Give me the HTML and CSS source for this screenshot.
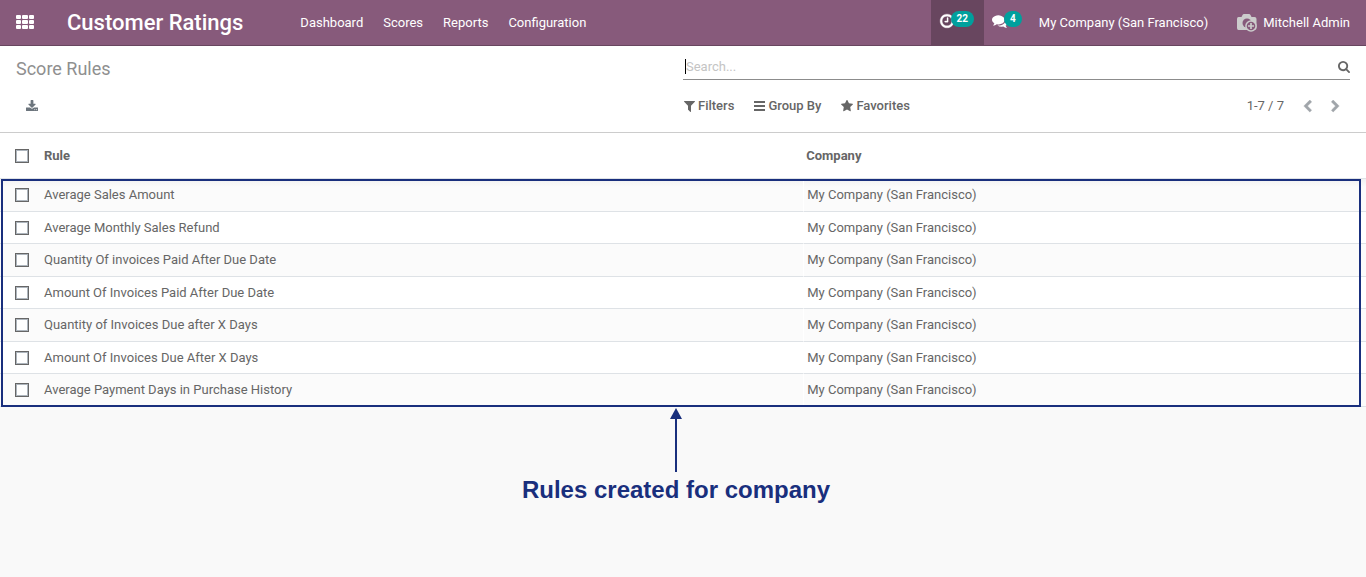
FILE: index.html
```html
<!DOCTYPE html>
<html lang="en">
<head>
<meta charset="utf-8">
<meta name="viewport" content="width=device-width, initial-scale=1">
<title>Customer Ratings - Score Rules</title>
<link rel="stylesheet" href="styles.css">
</head>
<body>
<header class="navbar">
  <button class="apps" type="button" aria-label="Applications">
    <svg width="18" height="14" viewBox="0 0 18 14" fill="currentColor"><rect width="5" height="4" rx="1"/><rect x="6" width="6" height="4" rx="1"/><rect x="13" width="5" height="4" rx="1"/><rect y="5" width="5" height="4" rx="1"/><rect x="6" y="5" width="6" height="4" rx="1"/><rect x="13" y="5" width="5" height="4" rx="1"/><rect y="10" width="5" height="4" rx="1"/><rect x="6" y="10" width="6" height="4" rx="1"/><rect x="13" y="10" width="5" height="4" rx="1"/></svg>
  </button>
  <a class="brand" href="#">Customer Ratings</a>
  <nav class="menu">
    <a href="#">Dashboard</a>
    <a href="#">Scores</a>
    <a href="#">Reports</a>
    <a href="#">Configuration</a>
  </nav>
  <div class="systray">
    <button class="tray tray-active" type="button" aria-label="Activities">
      <svg width="16" height="16" viewBox="0 0 1792 1792" fill="currentColor" stroke="currentColor" stroke-width="40"><path d="M1024 544v448q0 14-9 23t-23 9h-320q-14 0-23-9t-9-23v-64q0-14 9-23t23-9h224v-352q0-14 9-23t23-9h64q14 0 23 9t9 23zm416 352q0-148-73-273t-198-198-273-73-273 73-198 198-73 273 73 273 198 198 273 73 273-73 198-198 73-273zm224 0q0 209-103 385.500t-279.500 279.500-385.500 103-385.500-103-279.500-279.500-103-385.500 103-385.500 279.500-279.500 385.500-103 385.500 103 279.500 279.500 103 385.500z"/></svg>
      <span class="badge">22</span>
    </button>
    <button class="tray" type="button" aria-label="Conversations">
      <svg width="16" height="16" viewBox="0 0 1792 1792" fill="currentColor"><path d="M1408 768q0 139-94 257t-256.500 186.500-353.500 68.500q-86 0-176-16-124 88-278 128-36 9-86 16h-3q-11 0-20.500-8t-11.500-21q-1-3-1-6.500t.5-6.500 2-6l2.500-5 3.500-5.500 4-5 4.500-5 4-4.500q5-6 23-25t26-29.500 22.500-29 25-38.500 20.500-44q-124-72-195-177t-71-224q0-139 94-257t256.500-186.500 353.500-68.500 353.500 68.500 256.500 186.500 94 257zm384 256q0 120-71 224.500t-195 176.500q10 24 20.500 44t25 38.500 22.500 29 26 29.500 23 25q1 1 4 4.500t4.500 5 4 5 3.500 5.500l2.500 5 2 6 .5 6.500-1 6.500q-3 14-13 22t-22 7q-50-7-86-16-154-40-278-128-90 16-176 16-271 0-472-132 58 4 88 4 161 0 309-45t264-129q125-92 192-212t67-254q0-77-23-152 129 71 204 178t75 230z"/></svg>
      <span class="badge">4</span>
    </button>
    <button class="company" type="button">My Company (San Francisco)</button>
    <button class="user" type="button">
      <svg width="21" height="18" viewBox="0 0 21 18"><path fill="#ccc" d="M2.500 3h3l1-2q.5-1 1.500-1h5q1 0 1.500 1l1 2h3q2 0 2 2v9q0 2-2 2h-16q-1.500 0-1.500-2v-9q0-2 1.500-2z"/><circle cx="11" cy="9" r="4.500" fill="#875a7b"/><circle cx="15" cy="12" r="5.800" fill="#ccc"/><circle cx="15" cy="12" r="4.300" fill="#875a7b"/><path d="M15 9v6M12 12h6" stroke="#ccc" stroke-width="1.700"/></svg>
      <span>Mitchell Admin</span>
    </button>
  </div>
</header>

<section class="control-panel">
  <h1 class="title">Score Rules</h1>
  <div class="search">
    <input class="search-input" type="text" placeholder="Search..." aria-label="Search">
    <button class="icon-button" type="button" aria-label="Search">
      <svg width="12" height="12" viewBox="64 128 1664 1664" fill="currentColor"><path d="M1216 832q0-185-131.500-316.500t-316.500-131.500-316.500 131.500-131.500 316.500 131.500 316.500 316.500 131.500 316.500-131.500 131.500-316.500zm512 832q0 52-38 90t-90 38q-54 0-90-38l-343-342q-179 124-399 124-143 0-273.500-55.500t-225-150-150-225-55.500-273.500 55.500-273.500 150-225 225-150 273.500-55.500 273.500 55.500 225 150 150 225 55.500 273.500q0 220-124 399l343 343q37 37 37 90z"/></svg>
    </button>
  </div>
  <div class="actions">
    <button class="icon-button export" type="button" aria-label="Export all">
      <svg width="12" height="12" viewBox="0 0 1664 1664" fill="currentColor"><path d="M1280 1344q0-26-19-45t-45-19-45 19-19 45 19 45 45 19 45-19 19-45zm256 0q0-26-19-45t-45-19-45 19-19 45 19 45 45 19 45-19 19-45zm128-224v320q0 40-28 68t-68 28h-1472q-40 0-68-28t-28-68v-320q0-40 28-68t68-28h465l135 136q58 56 136 56t136-56l136-136h464q40 0 68 28t28 68zm-325-569q17 41-14 70l-448 448q-18 19-45 19t-45-19l-448-448q-31-29-14-70 17-39 59-39h256v-448q0-26 19-45t45-19h256q26 0 45 19t19 45v448h256q42 0 59 39z"/></svg>
    </button>
  </div>
  <div class="options">
    <button class="option" type="button">
      <svg width="11" height="11" viewBox="192 256 1408 1408" fill="currentColor"><path d="M1595 295q17 41-14 70l-493 493v742q0 42-39 59-13 5-25 5-27 0-45-19l-256-256q-19-19-19-45v-486l-493-493q-31-29-14-70 17-39 59-39h1280q42 0 59 39z"/></svg>
      Filters
    </button>
    <button class="option" type="button">
      <svg width="11" height="10" viewBox="0 0 11 10" fill="currentColor"><rect width="11" height="2"/><rect y="4" width="11" height="2"/><rect y="8" width="11" height="2"/></svg>
      Group By
    </button>
    <button class="option" type="button">
      <svg width="12" height="12" viewBox="64 64 1664 1664" fill="currentColor"><path d="M1728 647q0 22-26 48l-363 354 86 500q1 7 1 20 0 21-10.500 35.500t-30.500 14.500q-19 0-40-12l-449-236-449 236q-22 12-40 12-21 0-31.500-14.500t-10.500-35.500q0-6 2-20l86-500-364-354q-25-27-25-48 0-37 56-46l502-73 225-455q19-41 49-41t49 41l225 455 502 73q56 9 56 46z"/></svg>
      Favorites
    </button>
    <div class="pager">
      <span class="pager-count">1-7 / 7</span>
      <button class="icon-button" type="button" aria-label="Previous"><svg width="13" height="13" viewBox="0 0 1792 1792" fill="currentColor" stroke="currentColor" stroke-width="60"><path d="M1427 301l-531 531 531 531q19 19 19 45t-19 45l-166 166q-19 19-45 19t-45-19l-742-742q-19-19-19-45t19-45l742-742q19-19 45-19t45 19l166 166q19 19 19 45t-19 45z"/></svg></button>
      <button class="icon-button" type="button" aria-label="Next"><svg width="13" height="13" viewBox="0 0 1792 1792" fill="currentColor" stroke="currentColor" stroke-width="60"><path d="M1363 877l-742 742q-19 19-45 19t-45-19l-166-166q-19-19-19-45t19-45l531-531-531-531q-19-19-19-45t19-45l166-166q19-19 45-19t45 19l742 742q19 19 19 45t-19 45z"/></svg></button>
    </div>
  </div>
</section>

<main>
  <div class="list">
    <table class="rules">
      <colgroup><col class="col-select"><col><col class="col-company"></colgroup>
      <thead>
        <tr><th><input type="checkbox" aria-label="Select all"></th><th>Rule</th><th>Company</th></tr>
      </thead>
      <tbody>
        <tr><td><input type="checkbox" id="r1"></td><td><label for="r1">Average Sales Amount</label></td><td>My Company (San Francisco)</td></tr>
        <tr><td><input type="checkbox" id="r2"></td><td><label for="r2">Average Monthly Sales Refund</label></td><td>My Company (San Francisco)</td></tr>
        <tr><td><input type="checkbox" id="r3"></td><td><label for="r3">Quantity Of invoices Paid After Due Date</label></td><td>My Company (San Francisco)</td></tr>
        <tr><td><input type="checkbox" id="r4"></td><td><label for="r4">Amount Of Invoices Paid After Due Date</label></td><td>My Company (San Francisco)</td></tr>
        <tr><td><input type="checkbox" id="r5"></td><td><label for="r5">Quantity of Invoices Due after X Days</label></td><td>My Company (San Francisco)</td></tr>
        <tr><td><input type="checkbox" id="r6"></td><td><label for="r6">Amount Of Invoices Due After X Days</label></td><td>My Company (San Francisco)</td></tr>
        <tr><td><input type="checkbox" id="r7"></td><td><label for="r7">Average Payment Days in Purchase History</label></td><td>My Company (San Francisco)</td></tr>
      </tbody>
    </table>
    <div class="highlight"></div>
  </div>
  <div class="callout">
    <svg width="12" height="64" viewBox="0 0 12 64" fill="currentColor"><path d="M6 0l6 11h-12z"/><rect x="5" y="10" width="2" height="54"/></svg>
    <p class="callout-text">Rules created for company</p>
  </div>
</main>
</body>
</html>
```
FILE: styles.css
```css
* {
  box-sizing: border-box;
}

body {
  margin: 0;
  background: #f9f9f9;
  color: #666;
  font: 13px/20px Roboto, "Liberation Sans", sans-serif;
}

a {
  color: inherit;
  text-decoration: none;
}

button {
  padding: 0;
  border: 0;
  background: none;
  color: inherit;
  font: inherit;
}

svg {
  display: block;
  flex: none;
}

.navbar {
  display: flex;
  align-items: stretch;
  height: 46px;
  padding: 0 16px;
  border-bottom: 1px solid #68465f;
  background: #875a7b;
  color: #fff;
}

.apps {
  display: flex;
  align-items: center;
  padding-bottom: 1px;
}

.brand {
  margin: 0 57px 0 33px;
  font-size: 22px;
  font-weight: 500;
  line-height: 45px;
}

.menu {
  display: flex;
  gap: 20px;
  line-height: 45px;
}

.systray {
  display: flex;
  margin-left: auto;
}

.tray {
  display: flex;
  align-items: center;
  padding: 0 10px 3px 8px;
}

.tray-active {
  background: #68465f;
}

.badge {
  margin: 0 0 4px -4px;
  padding: 0 6px;
  border-radius: 8px;
  background: #00a09d;
  font-size: 10px;
  font-weight: 700;
  line-height: 16px;
}

.company {
  margin: 0 28px 0 7px;
}

.user {
  display: flex;
  align-items: center;
  gap: 6px;
}

.control-panel {
  display: grid;
  grid-template-columns: 1fr 1fr;
  row-gap: 12px;
  padding: 8px 16px 12px;
  border-bottom: 1px solid #ccc;
  background: #fff;
}

.title {
  margin: 4px 0 0;
  color: #8f8f8f;
  font-size: 18px;
  font-weight: 400;
  line-height: 22px;
}

.search {
  display: flex;
  align-items: center;
  height: 26px;
  border-bottom: 1px solid #8c8c8c;
}

.search-input {
  flex: 1;
  min-width: 0;
  height: 15px;
  margin-left: 2px;
  padding: 0;
  border: 0;
  border-left: 1px solid #000;
  outline: 0;
  background: none;
  color: #000;
  font: inherit;
}

.search-input::placeholder {
  color: #c4c4c4;
}

.actions,
.options,
.option,
.pager {
  display: flex;
  align-items: center;
}

.actions {
  padding-left: 10px;
}

.export {
  color: #6c757d;
}

.options {
  height: 28px;
  gap: 20px;
  padding-left: 1px;
}

.option {
  gap: 3px;
  font-weight: 500;
}

.pager {
  gap: 15px;
  margin-left: auto;
  padding-right: 8px;
  color: #a0a5aa;
}

.pager-count {
  margin-right: 2px;
  color: #666;
}

.list {
  position: relative;
}

.rules {
  width: 100%;
  border-collapse: separate;
  border-spacing: 0;
  table-layout: fixed;
  background: #fff;
}

.col-select {
  width: 39px;
}

.col-company {
  width: 41.2%;
}

th,
td {
  padding: 0 5px;
  border-bottom: 1px solid #dee2e6;
  text-align: left;
}

th {
  height: 46px;
  font-weight: 700;
}

th:last-child {
  padding-left: 3px;
}

td {
  height: 32px;
}

tr:nth-child(odd) td {
  height: 33px;
  background: #fbfbfb;
}

tbody tr:first-child td {
  background: linear-gradient(#f1f1f1, #fbfbfb 8px);
}

td:last-child {
  padding-left: 3px;
  border-left: 1px solid #fff;
}

th:first-child,
td:first-child {
  padding: 0 0 0 15px;
}

input[type="checkbox"] {
  display: block;
  width: 14px;
  height: 14px;
  margin: 0;
  border: 1px solid #666;
  outline: 1px solid #adb5bd;
  outline-offset: -2px;
  background: #fff;
  appearance: none;
}

.highlight {
  position: absolute;
  inset: 46px 5px 0 1px;
  border: 2px solid #192f7d;
  pointer-events: none;
}

.callout {
  display: flex;
  flex-direction: column;
  align-items: center;
  gap: 4px;
  padding: 1px 14px 0 0;
  color: #192f7d;
}

.callout-text {
  margin: 0;
  font: 700 24px/28px "Liberation Sans", Arial, sans-serif;
}
```
